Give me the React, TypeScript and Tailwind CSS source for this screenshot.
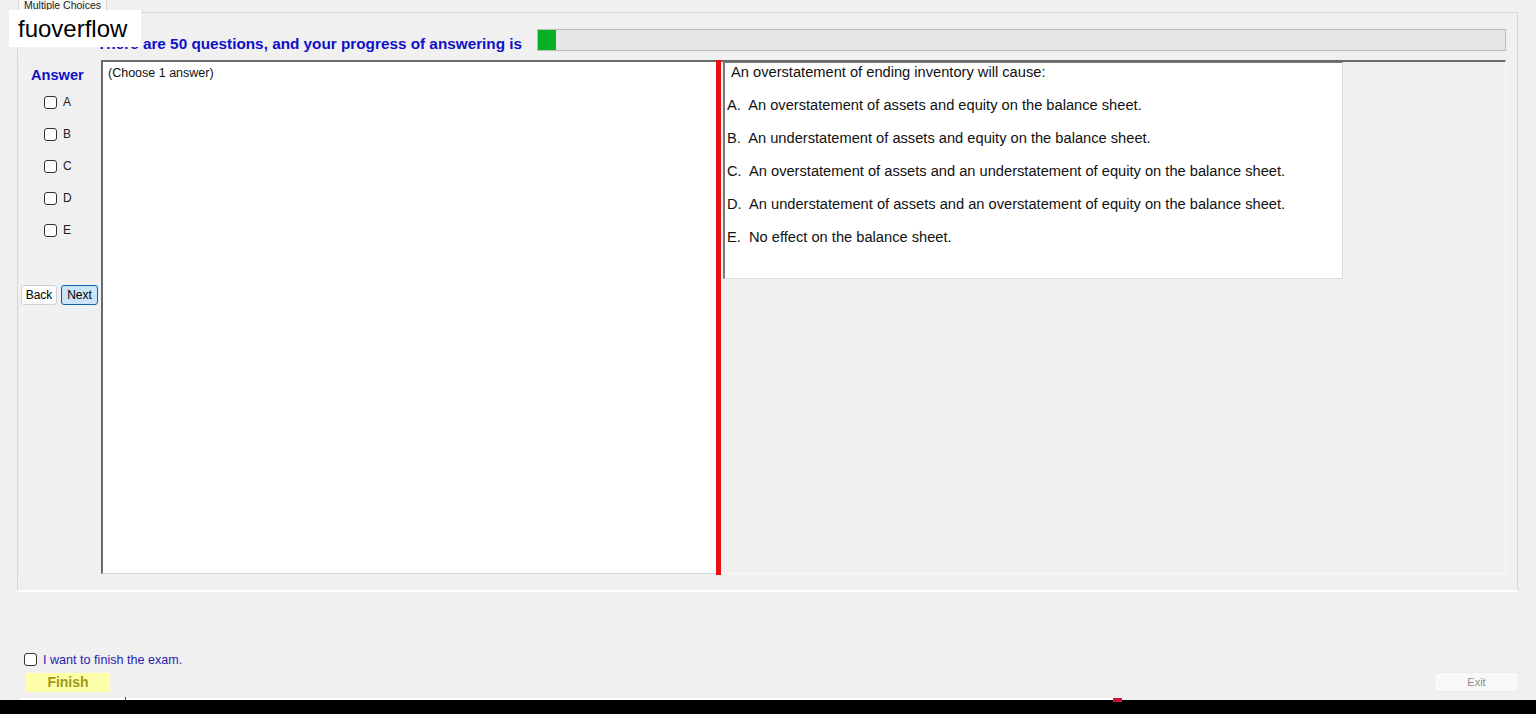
import React from 'react';

const answers = ['A', 'B', 'C', 'D', 'E'];

const options = [
    'A.  An overstatement of assets and equity on the balance sheet.',
    'B.  An understatement of assets and equity on the balance sheet.',
    'C.  An overstatement of assets and an understatement of equity on the balance sheet.',
    'D.  An understatement of assets and an overstatement of equity on the balance sheet.',
    'E.  No effect on the balance sheet.',
];

const Box = () => (
    <span className="inline-block w-[13px] h-[13px] rounded-[3px] border border-[#333333] bg-white shrink-0" />
);

export default function App() {
    return (
        <div className="relative w-[1536px] h-[714px] overflow-hidden bg-[#f0f0f0] text-black font-['Liberation_Sans',Arial,sans-serif]">
            {/* tab strip */}
            <div className="h-[12px] flex">
                <div className="ml-[18px] w-[89px] h-[12px] overflow-hidden bg-[#f7f7f7] border-x border-[#d9d9d9] text-[10.5px] leading-[10px] text-center text-[#222]">
                    Multiple Choices
                </div>
            </div>

            {/* tab page */}
            <div className="ml-[17px] w-[1501px] h-[579px] border border-[#d6d6d6] border-b-white shadow-[0_1px_0_#ffffff] flex flex-col">
                {/* header */}
                <div className="h-[47px] flex items-start">
                    <div className="ml-[79px] mt-[22px] text-[15.3px] leading-[17px] font-bold text-[#1010c8] whitespace-nowrap">
                        There are 50 questions, and your progress of answering is
                    </div>
                    <div className="ml-[15px] mt-[16px] mr-[11px] flex-1 h-[22px] bg-[#e6e6e6] border border-[#bcbcbc] flex">
                        <div className="w-[18px] h-full bg-[#06b025]" />
                    </div>
                </div>

                {/* content */}
                <div className="h-[515px] flex">
                    <div className="w-[83px] flex flex-col border-l border-[#fbfbfb] ml-[4px] -mr-[4px]">
                        <div className="ml-[8px] mt-[7px] text-[14.6px] leading-[17px] font-bold text-[#1010c8]">Answer</div>
                        <div className="mt-[2px] flex flex-col">
                            {answers.map((a) => (
                                <div key={a} className="h-[32px] flex items-center ml-[21px] gap-[6px]">
                                    <Box />
                                    <span className="text-[12px] leading-[14px] text-[#222]">{a}</span>
                                </div>
                            ))}
                        </div>
                        <div className="mt-[39px] -ml-[2px] flex gap-[4px]">
                            <button className="w-[36px] h-[20px] rounded-[3px] border border-[#d0d0d0] bg-[#fdfdfd] text-[12px] leading-[18px] text-black">Back</button>
                            <button className="w-[37px] h-[20px] rounded-[3px] border border-[#0a64ad] bg-[#cce4f7] text-[12px] leading-[18px] text-black">Next</button>
                        </div>
                    </div>

                    <div className="w-[615px] h-[514px] bg-white border-t-2 border-l-2 border-t-[#6a6a6a] border-l-[#6a6a6a] border-b border-b-[#d8d8d8]">
                        <div className="ml-[5px] mt-[4px] text-[12.5px] leading-[14px] text-[#111]">(Choose 1 answer)</div>
                    </div>

                    <div className="w-[5px] h-[515px] bg-[#e81010]" />

                    <div className="flex-1 mr-[11px] h-[514px] border-t-2 border-t-[#6a6a6a] border-r border-r-[#fafafa] border-b border-b-[#fafafa]">
                        <div className="ml-[2px] w-[620px] h-[217px] bg-white border-l-2 border-l-[#7a7a7a] border-t border-t-[#7a7a7a] border-r border-r-[#dcdcdc] border-b border-b-[#dcdcdc] text-[14.67px] text-[#111]">
                            <div className="h-[19px] leading-[19px] pl-[6px] whitespace-pre">An overstatement of ending inventory will cause:</div>
                            <div className="mt-[7px]">
                                {options.map((o) => (
                                    <div key={o} className="h-[33px] leading-[33px] pl-[2px] whitespace-pre">{o}</div>
                                ))}
                            </div>
                        </div>
                    </div>
                </div>
            </div>

            {/* finish area */}
            <div className="mt-[60px] ml-[24px] h-[17px] flex items-center gap-[6px]">
                <Box />
                <span className="text-[12.6px] leading-[14px] text-[#2b22b0]">I want to finish the exam.</span>
            </div>
            <div className="mt-[4px] h-[20px] flex items-start justify-between">
                <div className="ml-[26px] mt-[1px] w-[84px] h-[19px] bg-[#ffffaa] text-[14px] leading-[19px] font-bold text-center text-[#9a9a18]">Finish</div>
                <div className="mr-[17px] w-[85px] h-[20px] rounded-[3px] border border-[#ebebeb] bg-[#f8f8f8] text-[11px] leading-[18px] text-center text-[#8a8a8a]">Exit</div>
            </div>

            {/* bottom strip */}
            <div className="mt-[6px] h-[2px] flex">
                <div className="ml-[20px] w-[1093px] h-[2px] bg-white relative">
                    <div className="absolute left-[105px] -top-[1px] w-[1px] h-[3px] bg-[#555]" />
                </div>
                <div className="w-[9px] h-[4px] bg-[#c8143c]" />
            </div>
            <div className="h-[14px] bg-black" />

            {/* watermark overlay */}
            <div className="absolute left-[9px] top-[10px] w-[132px] h-[37px] bg-white pl-[9px] text-[24px] leading-[37px] text-black">
                fuoverflow
            </div>
        </div>
    );
}
